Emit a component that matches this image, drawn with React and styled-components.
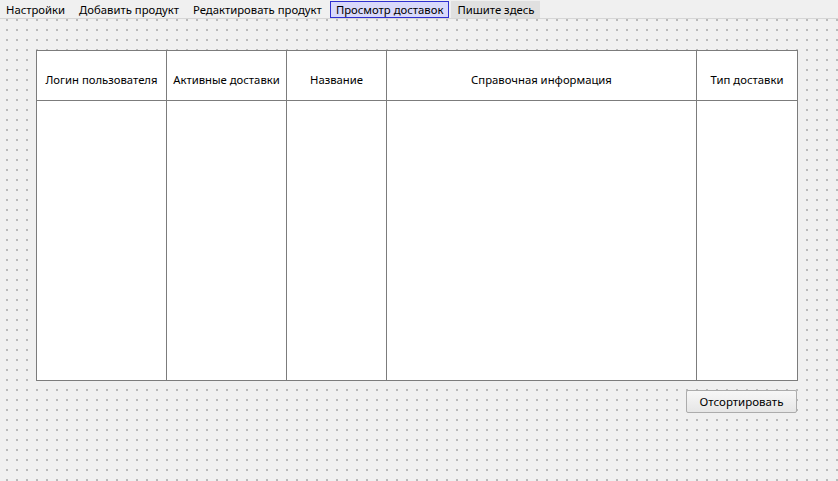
import styled, { createGlobalStyle } from 'styled-components';

const GlobalStyle = createGlobalStyle`
  html, body {
    margin: 0;
    padding: 0;
    background: #f0f0f0;
  }
  body {
    font-family: "Noto Sans", "Open Sans", sans-serif;
    font-size: 11.3px;
    color: #000;
  }
`;

const Window = styled.div`
  width: 838px;
  height: 481px;
  display: flex;
  flex-direction: column;
  background: #f0f0f0;
  overflow: hidden;
`;

const MenuBar = styled.div`
  height: 19px;
  display: flex;
  align-items: center;
  gap: 2px;
  border-bottom: 1px solid #d6d6d6;
  box-sizing: border-box;
`;

const MenuItem = styled.div`
  height: 17px;
  line-height: 15px;
  padding: 0 5px;
  box-sizing: border-box;
  white-space: nowrap;
  border: 1px solid ${p => (p.$active ? '#2f2fcf' : 'transparent')};
  background: ${p => (p.$active ? '#d9d9fb' : p.$placeholder ? '#e0e0e0' : 'transparent')};
`;

const Canvas = styled.div`
  flex: 1;
  padding: 31px 40px 0 36px;
  background-color: #f0f0f0;
  background-image: radial-gradient(circle at 1px 1px, #b8b8b8 0.7px, transparent 1px);
  background-size: 10px 10px;
  background-position: 6px 0px;
  display: flex;
  flex-direction: column;
  align-items: flex-start;
`;

const Table = styled.div`
  width: 762px;
  height: 331px;
  box-sizing: border-box;
  border: 1px solid #7c7c7c;
  background: #fff;
  display: grid;
  grid-template-columns: 130px 120px 100px 310px 1fr;
  grid-template-rows: 50px 1fr;
`;

const HeaderCell = styled.div`
  display: flex;
  align-items: center;
  justify-content: center;
  border-bottom: 1px solid #7c7c7c;
  border-right: ${p => (p.$last ? 'none' : '1px solid #7c7c7c')};
  white-space: nowrap;
  padding-top: 7px;
  box-sizing: border-box;
`;

const BodyCell = styled.div`
  border-right: ${p => (p.$last ? 'none' : '1px solid #7c7c7c')};
`;

const Footer = styled.div`
  width: 762px;
  display: flex;
  justify-content: flex-end;
  margin-top: 9px;
`;

const SortButton = styled.button`
  width: 111px;
  height: 23px;
  margin-right: 1px;
  font-family: inherit;
  font-size: 11.5px;
  color: #000;
  border: 1px solid #acacac;
  border-radius: 2px;
  background: linear-gradient(#f7f7f7, #e6e6e6);
  padding: 0;
`;

const columns = [
  'Логин пользователя',
  'Активные доставки',
  'Название',
  'Справочная информация',
  'Тип доставки',
];

const App = () => {
  return (
    <Window>
      <GlobalStyle />
      <MenuBar>
        <MenuItem>Настройки</MenuItem>
        <MenuItem>Добавить продукт</MenuItem>
        <MenuItem>Редактировать продукт</MenuItem>
        <MenuItem $active>Просмотр доставок</MenuItem>
        <MenuItem $placeholder>Пишите здесь</MenuItem>
      </MenuBar>
      <Canvas>
        <Table>
          {columns.map((c, i) => (
            <HeaderCell key={c} $last={i === columns.length - 1}>{c}</HeaderCell>
          ))}
          {columns.map((c, i) => (
            <BodyCell key={c} $last={i === columns.length - 1} />
          ))}
        </Table>
        <Footer>
          <SortButton>Отсортировать</SortButton>
        </Footer>
      </Canvas>
    </Window>
  );
};

export default App;
